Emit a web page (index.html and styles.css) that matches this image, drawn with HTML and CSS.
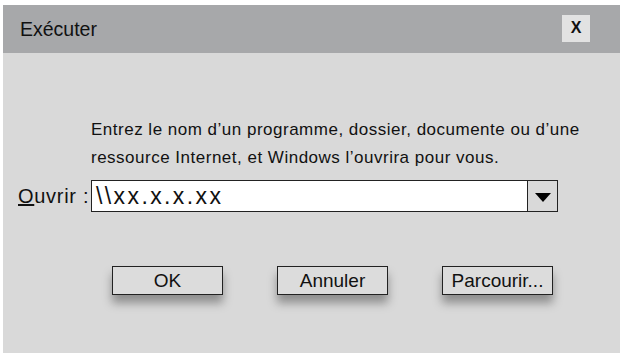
FILE: index.html
```html
<!DOCTYPE html>
<html lang="fr">
<head>
<meta charset="utf-8">
<link rel="stylesheet" href="styles.css">
</head>
<body>
<div class="dialog">
  <div class="titlebar">
    <span class="title">Exécuter</span>
    <span class="close">X</span>
  </div>
  <div class="content">
    <p class="desc">Entrez le nom d’un programme, dossier, documente ou d’une<br>ressource Internet, et Windows l’ouvrira pour vous.</p>
    <div class="row">
      <label class="label"><u>O</u>uvrir :</label>
      <div class="combo">
        <span class="value">\\xx.x.x.xx</span>
        <span class="drop"><svg width="16" height="9" viewBox="0 0 16 9"><polygon points="0,0 16,0 8,9" fill="#000"/></svg></span>
      </div>
    </div>
    <div class="buttons">
      <span class="btn">OK</span>
      <span class="btn">Annuler</span>
      <span class="btn">Parcourir...</span>
    </div>
  </div>
</div>
</body>
</html>
```
FILE: styles.css
```css
html, body { margin: 0; padding: 0; background: #fff; }
body { font-family: "Liberation Sans", Arial, sans-serif; color: #111; }
.dialog {
  margin: 5px 3px 0 3px;
  width: 617px;
  height: 348px;
  background: #d9d9d9;
  display: flex;
  flex-direction: column;
}
.titlebar {
  height: 48px;
  background: #a7a8aa;
  display: flex;
  align-items: center;
  justify-content: space-between;
  padding: 0 30px 0 17px;
  box-sizing: border-box;
}
.title { font-size: 19.5px; }
.close {
  width: 28px; height: 27px;
  background: #e2e2e2;
  display: flex; align-items: center; justify-content: center;
  font-size: 16px; font-weight: bold;
  margin-top: -2px;
}
.content { padding: 63px 0 0 0; }
.desc {
  margin: 0 0 0 88px;
  font-size: 17px;
  letter-spacing: 0.5px;
  line-height: 28px;
}
.row {
  display: flex;
  align-items: center;
  margin-top: 8px;
  height: 32px;
}
.label { font-size: 20px; letter-spacing: 0.7px; margin-left: 15px; width: 73px; white-space: nowrap; }
.combo {
  width: 467px; height: 32px;
  box-sizing: border-box;
  border: 1px solid #222;
  background: #fff;
  display: flex;
  align-items: center;
}
.value { flex: 1; font-size: 23px; padding-left: 4px; letter-spacing: 2.4px; }
.drop {
  width: 30px; height: 30px;
  background: #d9d9d9;
  border-left: 1px solid #222;
  display: flex; align-items: center; justify-content: center;
  padding-top: 3px; box-sizing: border-box;
}
.buttons {
  display: flex;
  margin: 54px 0 0 109px;
  gap: 54px;
}
.btn {
  width: 111px; height: 29px;
  box-sizing: border-box;
  border: 1px solid #222;
  background: #dcdcdc;
  display: flex; align-items: center; justify-content: center;
  font-size: 19px;
  box-shadow: 0 8px 9px rgba(0,0,0,0.35);
}
```
